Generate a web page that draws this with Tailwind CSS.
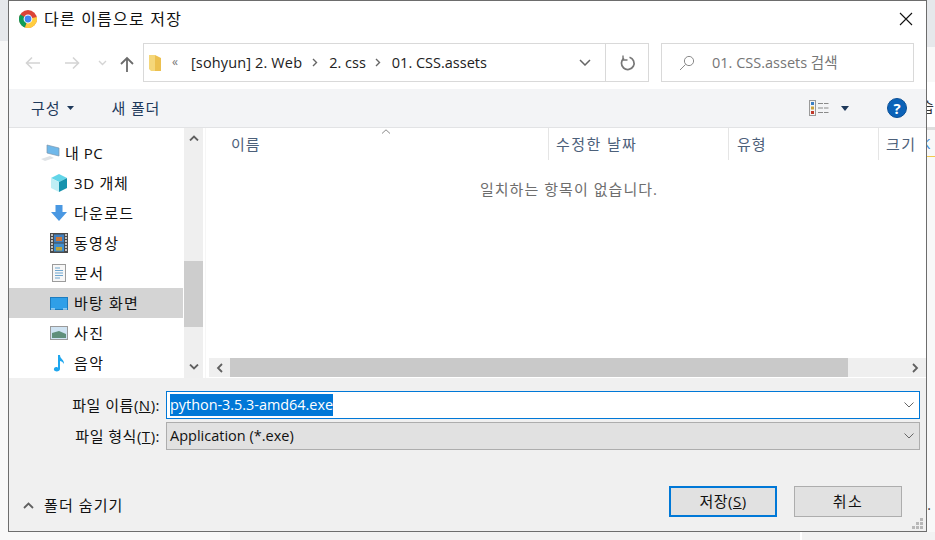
<!DOCTYPE html>
<html lang="ko">
<head>
<meta charset="utf-8"/>
<title>다른 이름으로 저장</title>
<script src="https://cdn.jsdelivr.net/npm/@tailwindcss/browser@4"></script>
</head>
<body class="relative w-[935px] h-[540px] overflow-hidden bg-[#f8f8f8] font-['Open_Sans','Noto_Sans_CJK_KR',sans-serif] text-[14.5px] text-black">

<!-- page behind the dialog -->
<div class="absolute left-0 top-0 w-[8px] h-[41px] bg-[#e6e8eb]"></div>
<div class="absolute right-0 top-0 w-[8px] h-[47px] bg-[#e6e8eb]"></div>
<div class="absolute right-0 top-[82px] w-[8px] h-[45px] bg-white"></div>
<div class="absolute right-0 top-[127px] w-[8px] h-[3px] bg-[#dddddd]"></div>
<div class="absolute left-[921px] top-[98px] text-[14px] leading-[18px] text-[#333333]">습</div>
<div class="absolute left-[921px] top-[134px] text-[15px] leading-[18px] text-[#3f8fdc]">K</div>
<div class="absolute right-0 top-[156px] w-[8px] h-px bg-[#f2c94c]"></div>
<div class="absolute left-[923px] top-[496px] text-[14px] leading-[18px] text-[#333333]">).</div>
<div class="absolute left-[230px] top-[532px] w-[705px] h-[8px] bg-[#f2f2f2]"></div>
<div class="absolute left-[800px] top-[532px] w-[2px] h-[8px] bg-white"></div>

<!-- dialog -->
<div class="absolute left-[8px] top-0 w-[919px] h-[532px] border border-[#6d6d6d] bg-[#f0f0f0] flex flex-col">

  <!-- title bar -->
  <div class="h-[42px] bg-white flex items-center pl-[10px] pr-[12px] pb-[6px] shrink-0">
    <svg class="w-[18px] h-[18px] mr-[7px]" viewBox="0 0 18 18">
      <circle cx="9" cy="9" r="9" fill="#db4437"/>
      <path d="M9 9 L1.2 4.5 A9 9 0 0 0 6 17.5 Z" fill="#0f9d58"/>
      <path d="M9 9 L17.8 7 A9 9 0 0 1 6 17.5 Z" fill="#ffcd40"/>
      <circle cx="9" cy="9" r="4.4" fill="#fff"/>
      <circle cx="9" cy="9" r="3.4" fill="#4285f4"/>
    </svg>
    <span class="text-[16px] text-[#111111] tracking-[1.2px]">다른 이름으로 저장</span>
    <svg class="ml-auto w-[14px] h-[14px] mr-[1px]" viewBox="0 0 14 14" fill="none" stroke="#111" stroke-width="1.1"><path d="M1 1 L13 13 M13 1 L1 13"/></svg>
  </div>

  <!-- navigation row -->
  <div class="h-[46px] bg-white flex items-start shrink-0">
    <div class="w-[134px] h-[39px] flex items-center shrink-0 pl-[16px]">
      <svg class="w-[16px] h-[14px]" viewBox="0 0 16 14" fill="none" stroke="#d4d4d4" stroke-width="1.6"><path d="M15 7 H1.5 M7 1.5 L1.5 7 L7 12.5"/></svg>
      <svg class="w-[16px] h-[14px] ml-[23px]" viewBox="0 0 16 14" fill="none" stroke="#d4d4d4" stroke-width="1.6"><path d="M1 7 H14.5 M9 1.5 L14.5 7 L9 12.5"/></svg>
      <svg class="w-[9px] h-[6px] ml-[18px]" viewBox="0 0 9 6" fill="none" stroke="#d4d4d4" stroke-width="1.4"><path d="M1 1 L4.5 4.5 L8 1"/></svg>
      <svg class="w-[14px] h-[16px] ml-[13px] mt-[2px]" viewBox="0 0 14 16" fill="none" stroke="#6b6b6b" stroke-width="1.8"><path d="M7 16 V2 M1 8 L7 2 L13 8"/></svg>
    </div>
    <div class="w-[506px] h-[39px] border border-[#d9d9d9] flex items-center shrink-0">
      <svg class="w-[12px] h-[16px] ml-[5px] shrink-0" viewBox="0 0 12 16"><path d="M0 0 H6 V3 H12 V16 H2 L0 14 Z" fill="#f5d77a"/><path d="M6 0 L12 3 V16 H6 Z" fill="#ecc04f"/></svg>
      <span class="ml-[11px] text-[#777777] text-[12px] leading-none mt-[-2px]">«</span>
      <span class="ml-[13px] text-[#222222] tracking-[0.14px]">[sohyun] 2. Web</span>
      <svg class="w-[6px] h-[9px] ml-[10px]" viewBox="0 0 6 9" fill="none" stroke="#666" stroke-width="1.4"><path d="M1 1 L4.5 4.5 L1 8"/></svg>
      <span class="ml-[11px] text-[#222222]">2. css</span>
      <svg class="w-[6px] h-[9px] ml-[9px]" viewBox="0 0 6 9" fill="none" stroke="#666" stroke-width="1.4"><path d="M1 1 L4.5 4.5 L1 8"/></svg>
      <span class="ml-[11px] text-[#222222]">01. CSS.assets</span>
      <svg class="w-[12px] h-[7px] ml-auto mr-[14px]" viewBox="0 0 12 7" fill="none" stroke="#666" stroke-width="1.5"><path d="M1 1 L6 6 L11 1"/></svg>
      <div class="w-[43px] h-full border-l border-[#d9d9d9] flex items-center justify-center shrink-0 pl-[1px]">
        <svg class="w-[16px] h-[16px]" viewBox="0 0 16 16" fill="none" stroke="#777" stroke-width="1.7"><path d="M9.5 2.2 A6.3 6.3 0 1 1 4 3.2"/><path d="M3 0.5 V5 H7.5" stroke-width="1.4"/></svg>
      </div>
    </div>
    <div class="ml-[12px] w-[253px] h-[39px] border border-[#d9d9d9] flex items-center shrink-0">
      <svg class="w-[16px] h-[16px] ml-[17px]" viewBox="0 0 16 16" fill="none" stroke="#8a8a8a" stroke-width="1"><circle cx="10" cy="6" r="4.6"/><path d="M6.6 9.4 L1 15"/></svg>
      <span class="ml-[17px] text-[#767676]">01. CSS.assets 검색</span>
    </div>
  </div>

  <!-- toolbar -->
  <div class="h-[39px] bg-[#f3f4f6] border-b border-[#e2e3e5] flex items-center shrink-0 text-[#1e395b] text-[15px]">
    <span class="ml-[22px] tracking-[1px]">구성</span>
    <svg class="w-[7px] h-[4px] ml-[6px]" viewBox="0 0 7 4"><path d="M0 0 H7 L3.5 4 Z" fill="#1e395b"/></svg>
    <span class="ml-[38px] tracking-[0.8px]">새 폴더</span>
    <svg class="ml-auto w-[20px] h-[16px]" viewBox="0 0 20 16" fill="none">
      <rect x="0.5" y="0.5" width="6" height="15" fill="#f5f5f5" stroke="#9a9a9a"/>
      <rect x="2" y="2" width="3" height="3" fill="#3b7fc4"/><rect x="2" y="6.5" width="3" height="3" fill="#c9a13b"/><rect x="2" y="11" width="3" height="3" fill="#c0392b"/>
      <path d="M9 3.5 H14 M15 3.5 H19.5 M9 8 H14 M15 8 H19.5 M9 12.5 H14 M15 12.5 H19.5" stroke="#8a8a8a"/>
    </svg>
    <svg class="w-[8px] h-[5px] ml-[12px]" viewBox="0 0 8 5"><path d="M0 0 H8 L4 5 Z" fill="#1e395b"/></svg>
    <div class="w-[20px] h-[20px] ml-[38px] mr-[19px] rounded-full bg-[#0b62b8] border border-[#0a4f96] flex items-center justify-center text-white text-[15px] font-bold leading-none">?</div>
  </div>

  <!-- browser -->
  <div class="h-[250px] bg-white flex shrink-0">
    <!-- nav tree -->
    <div class="w-[175px] pt-[10px] shrink-0 text-[#111111] text-[15px]">
      <div class="h-[30px] flex items-center pl-[31px]">
        <svg class="w-[20px] h-[18px] mr-[5px]" viewBox="0 0 20 18"><path d="M7 1 L19 4 V12 L7 9 Z" fill="#6fb8ea" stroke="#7c97ad" stroke-width="0.7"/><path d="M1 15 L10 12 L14 14 L5 17 Z" fill="#dfe3e6"/></svg>
        <span class="tracking-[0.5px]">내 PC</span>
      </div>
      <div class="h-[30px] flex items-center pl-[41px]">
        <svg class="w-[18px] h-[18px] mr-[6px]" viewBox="0 0 18 18"><path d="M9 0 L17 4 L9 8 L1 4 Z" fill="#62d5e8"/><path d="M1 4 L9 8 V18 L1 14 Z" fill="#bfeef5"/><path d="M17 4 L9 8 V18 L17 14 Z" fill="#1592ad"/></svg>
        <span class="tracking-[0.7px]">3D 개체</span>
      </div>
      <div class="h-[30px] flex items-center pl-[41px]">
        <svg class="w-[18px] h-[18px] mr-[6px]" viewBox="0 0 18 18"><path d="M5.5 1 H12.5 V8 H17 L9 17 L1 8 H5.5 Z" fill="#4a98e2"/></svg>
        <span class="tracking-[1.3px]">다운로드</span>
      </div>
      <div class="h-[30px] flex items-center pl-[41px]">
        <svg class="w-[18px] h-[20px] mr-[6px]" viewBox="0 0 18 20"><rect width="18" height="20" fill="#4a4a4a"/><rect x="4" y="1.5" width="10" height="8" fill="#3f7fc0"/><rect x="4" y="10.5" width="10" height="8" fill="#3f8fd0"/><rect x="6" y="4" width="6" height="4" fill="#c7763a"/><rect x="6" y="14" width="6" height="3.5" fill="#b9a23c"/><path d="M1 2 H3 M1 5 H3 M1 8 H3 M1 11 H3 M1 14 H3 M1 17 H3 M15 2 H17 M15 5 H17 M15 8 H17 M15 11 H17 M15 14 H17 M15 17 H17" stroke="#e8e8e8" stroke-width="1.4"/></svg>
        <span class="tracking-[1.3px]">동영상</span>
      </div>
      <div class="h-[30px] flex items-center pl-[43px]">
        <svg class="w-[14px] h-[18px] mr-[8px]" viewBox="0 0 14 18"><rect x="0.5" y="0.5" width="13" height="17" fill="#f7f7f7" stroke="#9c9c9c"/><path d="M3 4 H8 M3 6.5 H11 M3 9 H11 M3 11.5 H11 M3 14 H8" stroke="#6ea6cf"/></svg>
        <span class="tracking-[1.5px]">문서</span>
      </div>
      <div class="h-[30px] flex items-center pl-[41px] bg-[#d4d4d4] mr-[1px]">
        <svg class="w-[18px] h-[13px] mr-[6px]" viewBox="0 0 18 13"><rect x="0.5" y="0.5" width="17" height="12" fill="#2f9fe8" stroke="#1c7cc0"/><path d="M1 12 H5 M13 12 H17" stroke="#e8f4fc"/></svg>
        <span class="tracking-[1.2px]">바탕 화면</span>
      </div>
      <div class="h-[30px] flex items-center pl-[41px]">
        <svg class="w-[18px] h-[14px] mr-[6px]" viewBox="0 0 18 14"><rect x="0.5" y="0.5" width="17" height="13" fill="#cfe3f2" stroke="#9a9a9a"/><path d="M2 7 L9 5 L16 8 V12 H2 Z" fill="#5f8f7a"/></svg>
        <span class="tracking-[1.5px]">사진</span>
      </div>
      <div class="h-[30px] flex items-center pl-[44px]">
        <svg class="w-[12px] h-[18px] mr-[9px]" viewBox="0 0 12 18"><path d="M5 1 H7 C7 5 11 5 11 10 C10 8 8 7 7 7 V15 C7 17 4 18 2 17 C0 16 1 13 3 13 C4 13 5 13 5 14 Z" fill="#1ea6ee"/></svg>
        <span class="tracking-[1.5px]">음악</span>
      </div>
    </div>

    <!-- tree scrollbar -->
    <div class="w-[19px] bg-[#efefef] flex flex-col items-center shrink-0">
      <div class="h-[20px] flex items-center justify-center shrink-0">
        <svg class="w-[10px] h-[6px]" viewBox="0 0 10 6" fill="none" stroke="#606060" stroke-width="1.8"><path d="M1 5.5 L5 1.5 L9 5.5"/></svg>
      </div>
      <div class="h-[113px] shrink-0"></div>
      <div class="w-full h-[66px] bg-[#cdcdcd] shrink-0"></div>
      <div class="mt-auto h-[22px] flex items-center justify-center shrink-0">
        <svg class="w-[10px] h-[6px]" viewBox="0 0 10 6" fill="none" stroke="#606060" stroke-width="1.8"><path d="M1 0.5 L5 4.5 L9 0.5"/></svg>
      </div>
    </div>

    <!-- file list -->
    <div class="flex-1 min-w-0 border-l border-[#f6f6f6] ml-[2px] flex flex-col text-[15px]">
      <div class="h-[32px] flex shrink-0 text-[#4c607a] relative">
        <div class="w-[343px] pl-[25px] flex items-center border-r border-[#e5e5e5] shrink-0 tracking-[1px]">이름</div>
        <svg class="absolute left-[175px] top-[1px] w-[10px] h-[5px]" viewBox="0 0 10 5" fill="none" stroke="#8a8a8a"><path d="M1 4.5 L5 0.8 L9 4.5"/></svg>
        <div class="w-[180px] pl-[7px] flex items-center border-r border-[#e5e5e5] shrink-0 tracking-[1.4px]">수정한 날짜</div>
        <div class="w-[150px] pl-[8px] flex items-center border-r border-[#e5e5e5] shrink-0 tracking-[1px]">유형</div>
        <div class="pl-[7px] flex items-center whitespace-nowrap tracking-[1.5px]">크기</div>
      </div>
      <div class="flex-1 min-h-0 text-center text-[#6d6d6d] pt-[18px] pl-[6px] tracking-[1.05px]">일치하는 항목이 없습니다.</div>
      <div class="ml-[3px] h-[19px] mb-[1px] flex bg-[#efefef] shrink-0">
        <div class="w-[21px] flex items-center justify-center shrink-0">
          <svg class="w-[7px] h-[10px]" viewBox="0 0 7 10" fill="none" stroke="#606060" stroke-width="1.8"><path d="M6 1 L2 5 L6 9"/></svg>
        </div>
        <div class="w-[618px] bg-[#c9c9c9] shrink-0"></div>
        <div class="ml-auto w-[21px] flex items-center justify-center shrink-0">
          <svg class="w-[7px] h-[10px]" viewBox="0 0 7 10" fill="none" stroke="#606060" stroke-width="1.8"><path d="M1 1 L5 5 L1 9"/></svg>
        </div>
      </div>
    </div>
  </div>

  <!-- save form -->
  <div class="relative flex-1 min-h-0 flex flex-col">
    <div class="mt-[13px] h-[28px] flex items-center shrink-0">
      <label class="w-[151px] text-right text-[15px] tracking-[0.5px] text-[#111111] shrink-0">파일 이름(<u>N</u>):</label>
      <div class="ml-[6px] w-[754px] h-full border border-[#0078d7] bg-white flex items-center shrink-0 pl-[3px]">
        <span class="bg-[#0078d7] text-white h-[22px] leading-[21px] text-[14.4px]">python-3.5.3-amd64.exe</span>
        <svg class="ml-auto w-[10px] h-[6px] mr-[5px]" viewBox="0 0 10 6" fill="none" stroke="#666"><path d="M0.5 0.5 L5 5 L9.5 0.5"/></svg>
      </div>
    </div>
    <div class="mt-[3px] h-[28px] flex items-center shrink-0">
      <label class="w-[151px] text-right text-[15px] tracking-[0.5px] text-[#111111] shrink-0">파일 형식(<u>T</u>):</label>
      <div class="ml-[6px] w-[754px] h-full border border-[#adadad] bg-[#e1e1e1] flex items-center shrink-0 pl-[3px] text-[#111111]">
        <span>Application (*.exe)</span>
        <svg class="ml-auto w-[10px] h-[6px] mr-[5px]" viewBox="0 0 10 6" fill="none" stroke="#666"><path d="M0.5 0.5 L5 5 L9.5 0.5"/></svg>
      </div>
    </div>
    <div class="mt-[36px] flex items-start shrink-0 text-[15px]">
      <div class="flex items-center h-[31px] pl-[14px] pt-[7px] text-[#111111]">
        <svg class="w-[11px] h-[7px] mr-[10px]" viewBox="0 0 11 7" fill="none" stroke="#606060" stroke-width="1.8"><path d="M1 6 L5.5 1.5 L10 6"/></svg>
        <span class="tracking-[1.1px]">폴더 숨기기</span>
      </div>
      <button class="ml-auto w-[108px] h-[31px] border-2 border-[#0078d7] bg-[#e1e1e1] text-[#111111] shrink-0 tracking-[0.5px]">저장(<u>S</u>)</button>
      <button class="ml-[17px] mr-[24px] w-[108px] h-[31px] border border-[#adadad] bg-[#e1e1e1] text-[#111111] shrink-0 tracking-[1.5px]">취소</button>
    </div>
    <svg class="absolute right-[2px] bottom-[1px] w-[12px] h-[12px]" viewBox="0 0 12 12" fill="#b8b8b8">
      <rect x="8" y="0" width="3" height="3"/><rect x="4" y="4" width="3" height="3"/><rect x="8" y="4" width="3" height="3"/><rect x="0" y="8" width="3" height="3"/><rect x="4" y="8" width="3" height="3"/><rect x="8" y="8" width="3" height="3"/>
    </svg>
  </div>
</div>
</body>
</html>
